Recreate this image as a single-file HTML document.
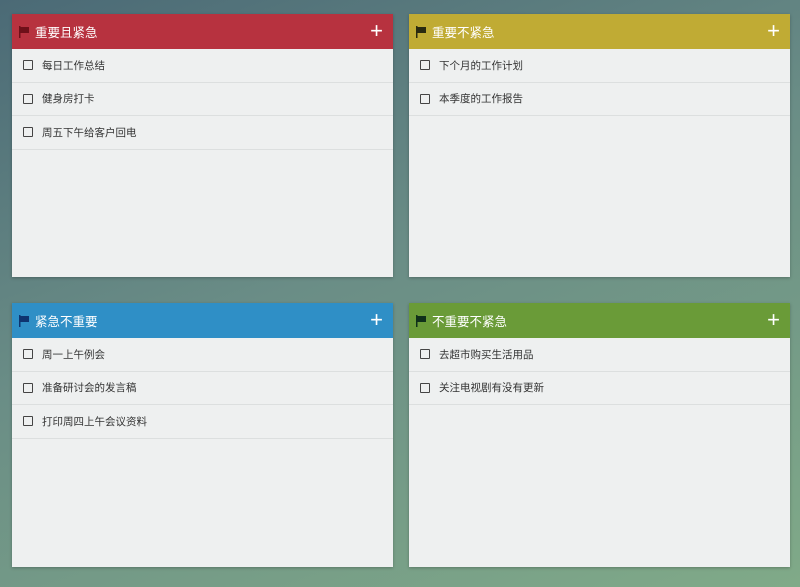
<!DOCTYPE html>
<html><head><meta charset="utf-8"><style>
*{margin:0;padding:0;box-sizing:border-box}
body{width:800px;height:587px;overflow:hidden;background:linear-gradient(160deg,#4b6a76 0%,#6a8d86 45%,#80aa88 100%);font-family:"Liberation Sans","Noto Sans CJK SC",sans-serif;position:relative}
.p{position:absolute;width:381px;background:#eef0f0;box-shadow:0 1px 3px rgba(0,0,0,.25)}
.h{height:35px;color:#fff;font-size:12.5px;display:flex;align-items:center;padding-left:6px;position:relative}
.h svg{margin-right:5px}
.h .plus{position:absolute;right:10px;top:4px;font-size:22px;font-weight:300}
.r{height:33.5px;border-bottom:1px solid #dcdfdf;display:flex;align-items:center;padding-left:11px;font-size:10.5px;color:#333}
.cb{width:10px;height:10px;border:1.3px solid #444;border-radius:1px;margin-right:9px}
</style></head><body>
<div class="p" style="left:12px;top:14px;height:263px"><div class="h" style="background:#b7323f"><svg width="12" height="12" viewBox="0 0 12 12"><path d="M1 0v12h1.5V7h8.5V1H2.5V0z" fill="#6e1019"/></svg>重要且紧急<span class="plus">+</span></div>
<div class="r"><span class="cb"></span>每日工作总结</div><div class="r"><span class="cb"></span>健身房打卡</div><div class="r"><span class="cb"></span>周五下午给客户回电</div></div>
<div class="p" style="left:409px;top:14px;height:263px"><div class="h" style="background:#c0ab34"><svg width="12" height="12" viewBox="0 0 12 12"><path d="M1 0v12h1.5V7h8.5V1H2.5V0z" fill="#2a2a10"/></svg>重要不紧急<span class="plus">+</span></div>
<div class="r"><span class="cb"></span>下个月的工作计划</div><div class="r"><span class="cb"></span>本季度的工作报告</div></div>
<div class="p" style="left:12px;top:303px;height:264px"><div class="h" style="background:#2f8fc6"><svg width="12" height="12" viewBox="0 0 12 12"><path d="M1 0v12h1.5V7h8.5V1H2.5V0z" fill="#0e3470"/></svg>紧急不重要<span class="plus">+</span></div>
<div class="r"><span class="cb"></span>周一上午例会</div><div class="r"><span class="cb"></span>准备研讨会的发言稿</div><div class="r"><span class="cb"></span>打印周四上午会议资料</div></div>
<div class="p" style="left:409px;top:303px;height:264px"><div class="h" style="background:#6a9b38"><svg width="12" height="12" viewBox="0 0 12 12"><path d="M1 0v12h1.5V7h8.5V1H2.5V0z" fill="#10301a"/></svg>不重要不紧急<span class="plus">+</span></div>
<div class="r"><span class="cb"></span>去超市购买生活用品</div><div class="r"><span class="cb"></span>关注电视剧有没有更新</div></div>
</body></html>
